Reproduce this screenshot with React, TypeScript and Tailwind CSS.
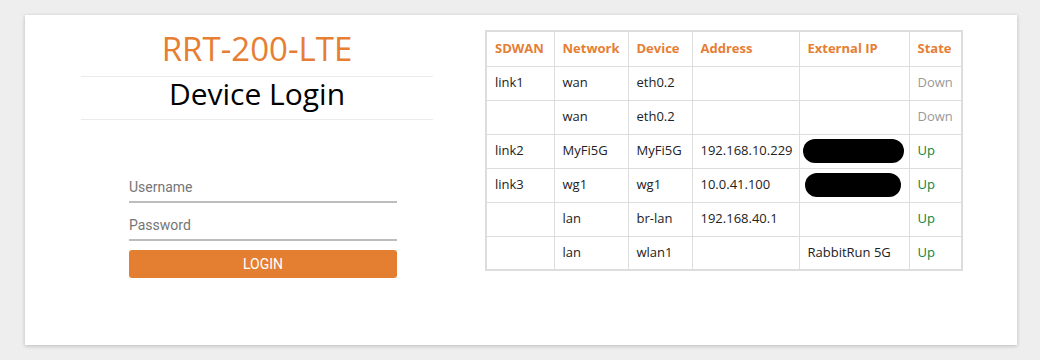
const rows = [
  { sdwan: 'link1', network: 'wan', device: 'eth0.2', address: '', ext: '', state: 'Down' },
  { sdwan: '', network: 'wan', device: 'eth0.2', address: '', ext: '', state: 'Down' },
  { sdwan: 'link2', network: 'MyFi5G', device: 'MyFi5G', address: '192.168.10.229', ext: 'redact-wide', state: 'Up' },
  { sdwan: 'link3', network: 'wg1', device: 'wg1', address: '10.0.41.100', ext: 'redact', state: 'Up' },
  { sdwan: '', network: 'lan', device: 'br-lan', address: '192.168.40.1', ext: '', state: 'Up' },
  { sdwan: '', network: 'lan', device: 'wlan1', address: '', ext: 'RabbitRun 5G', state: 'Up' },
];

const headers = ['SDWAN', 'Network', 'Device', 'Address', 'External IP', 'State'];
const widths = ['w-[68px]', 'w-[74px]', 'w-[64px]', 'w-[107px]', 'w-[110px]', 'w-[53px]'];

function ExtCell({ value }: { value: string }) {
  if (value === 'redact-wide') {
    return <div className="h-[24px] w-[101px] -ml-[5px] rounded-full bg-black" />;
  }
  if (value === 'redact') {
    return <div className="h-[24px] w-[96px] -ml-[3px] rounded-full bg-black" />;
  }
  return <>{value}</>;
}

export default function App() {
  return (
    <div className="min-h-[360px] w-[1040px] bg-[#eeeeee] pt-[15px] font-['Open_Sans',sans-serif]">
      <div className="ml-[25px] flex h-[330px] w-[992px] bg-white pl-[56px] shadow-[0_1px_4px_rgba(0,0,0,0.22)]">
        <div className="w-[352px]">
          <h1 className="flex h-[61px] items-center justify-center pt-[6px] text-[33px] leading-none text-[#e67e33]">
            RRT-200-LTE
          </h1>
          <h2 className="flex h-[44px] items-center justify-center border-y border-[#ebebeb] pb-[8px] text-[30px] leading-none text-black">
            Device Login
          </h2>
          <form className="ml-[48px] mt-[56px] flex w-[268px] flex-col font-['Roboto',sans-serif]">
            <input
              type="text"
              placeholder="Username"
              className="h-[27px] border-b-2 border-[#bdbdbd] bg-transparent pb-[4px] text-[14px] text-[#333] outline-none placeholder:text-[#757575]"
            />
            <input
              type="password"
              placeholder="Password"
              className="mt-[11px] h-[27px] border-b-2 border-[#bdbdbd] bg-transparent pb-[4px] text-[14px] text-[#333] outline-none placeholder:text-[#757575]"
            />
            <button
              type="button"
              className="mt-[9px] h-[28px] rounded-[3px] bg-[#e47f32] text-[14px] text-white"
            >
              LOGIN
            </button>
          </form>
        </div>
        <div className="ml-[52px] mt-[15px]">
          <table className="w-[476px] table-fixed border-collapse border-2 border-[#dddddd] text-[13px] text-[#222]">
            <thead>
              <tr className="h-[35px]">
                {headers.map((h, i) => (
                  <th
                    key={h}
                    className={`${widths[i]} border border-[#dddddd] px-[8px] text-left font-bold text-[#e67e33]`}
                  >
                    {h}
                  </th>
                ))}
              </tr>
            </thead>
            <tbody>
              {rows.map((r, idx) => (
                <tr key={idx} className="h-[34px]">
                  <td className="border border-[#dddddd] px-[8px]">{r.sdwan}</td>
                  <td className="border border-[#dddddd] px-[8px]">{r.network}</td>
                  <td className="border border-[#dddddd] px-[8px]">{r.device}</td>
                  <td className="border border-[#dddddd] px-[8px] whitespace-nowrap">{r.address}</td>
                  <td className="border border-[#dddddd] px-[8px] whitespace-nowrap">
                    <ExtCell value={r.ext} />
                  </td>
                  <td
                    className={`border border-[#dddddd] px-[8px] ${
                      r.state === 'Up' ? 'text-[#0b8540]' : 'text-[#999999]'
                    }`}
                  >
                    {r.state}
                  </td>
                </tr>
              ))}
            </tbody>
          </table>
        </div>
      </div>
    </div>
  );
}
